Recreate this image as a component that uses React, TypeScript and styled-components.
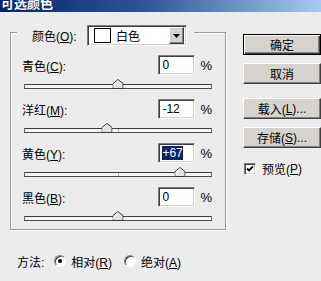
import React from 'react';
import styled, { createGlobalStyle, css } from 'styled-components';

const GlobalStyle = createGlobalStyle`
  html, body {
    margin: 0;
    padding: 0;
    background: #ececec;
  }

  body {
    font-family: "Liberation Sans", "Noto Sans CJK SC", sans-serif;
    font-size: 12px;
    color: #000;
  }
`;

const Window = styled.div`
  width: 321px;
  height: 281px;
  overflow: hidden;
  background: #ececec;
`;

const TitleBar = styled.div`
  height: 12px;
  overflow: hidden;
  background: linear-gradient(to right, #0a246a 0%, #2f5596 45%, #a6caf0 100%);
`;

const Title = styled.div`
  margin-top: -5px;
  padding-left: 1px;
  font-family: "Noto Sans CJK SC", sans-serif;
  font-size: 13px;
  font-weight: bold;
  line-height: 16px;
  color: #fff;
`;

const Body = styled.div`
  display: flex;
  align-items: flex-start;
  padding: 20px 0 0 10px;
`;

const GroupBox = styled.div`
  position: relative;
  box-sizing: border-box;
  width: 227px;
  padding: 22px 13px 8px 11px;
  border: 1px solid #9a9a9a;
  box-shadow: inset 1px 1px 0 #fff, 1px 1px 0 #fff;
`;

const Legend = styled.div`
  position: absolute;
  top: -8px;
  left: 6px;
  display: flex;
  align-items: center;
  height: 21px;
  padding: 0 7px 0 15px;
  background: #ececec;
`;

const LegendLabel = styled.span`
  width: 55px;
  white-space: nowrap;
`;

const U = styled.span`
  text-decoration: underline;
`;

const sunken = css`
  box-sizing: border-box;
  border: 1px solid;
  border-color: #7c7c7c #fff #fff #7c7c7c;
  box-shadow: inset 1px 1px 0 #404040, inset -1px -1px 0 #d4d0c8;
  background: #fff;
`;

const raised = css`
  box-sizing: border-box;
  border: 1px solid;
  border-color: #fff #404040 #404040 #fff;
  box-shadow: inset -1px -1px 0 #808080;
  background: #d6d3ce;
`;

const Dropdown = styled.div`
  ${sunken};
  display: flex;
  align-items: center;
  width: 100px;
  height: 21px;
  padding: 2px;
`;

const Swatch = styled.span`
  box-sizing: border-box;
  width: 17px;
  height: 15px;
  margin-left: 4px;
  border: 1px solid #000;
  background: #fff;
`;

const DropdownText = styled.span`
  margin-left: 5px;
`;

const ArrowButton = styled.span`
  ${raised};
  display: flex;
  align-items: center;
  justify-content: center;
  width: 15px;
  height: 17px;
  margin-left: auto;
`;

const Row = styled.div`
  & + & {
    margin-top: 10px;
  }
`;

const RowHead = styled.div`
  display: flex;
  align-items: center;
  height: 20px;
`;

const RowLabel = styled.span`
  flex: 1;
  white-space: nowrap;
`;

const NumberField = styled.div`
  ${sunken};
  display: flex;
  align-items: center;
  width: 37px;
  height: 20px;
  padding: 0 3px;
  font-size: 12px;
`;

const FieldValue = styled.span<{ $selected?: boolean }>`
  line-height: 14px;
  ${(props) =>
    props.$selected &&
    css`
      background: #0a246a;
      color: #fff;
    `}
`;

const Percent = styled.span`
  margin-left: 5px;
  font-size: 13px;
`;

const Track = styled.div`
  position: relative;
  box-sizing: border-box;
  height: 5px;
  margin: 9px 0 0 2px;
  border-top: 1px solid #3c3c3c;
  border-bottom: 1px solid #4a4a4a;
  border-left: 1px solid #6a6a6a;
  border-right: 1px solid #6a6a6a;
  background: #f6f6f6;

  &::after {
    content: '';
    position: absolute;
    left: 50%;
    top: 0;
    width: 1px;
    height: 3px;
    background: #a8a8a8;
  }
`;

const Thumb = styled.svg`
  position: absolute;
  bottom: -1px;
  z-index: 1;
  transform: translateX(-50%);
`;

const Side = styled.div`
  display: flex;
  flex-direction: column;
  margin-left: 17px;
  padding-top: 2px;
`;

const ButtonGroup = styled.div`
  display: flex;
  flex-direction: column;
  gap: 8px;

  & + & {
    margin-top: 14px;
  }
`;

const Button = styled.div<{ $default?: boolean }>`
  ${raised};
  display: flex;
  align-items: center;
  justify-content: center;
  width: 78px;
  height: 21px;
  white-space: nowrap;
  ${(props) =>
    props.$default &&
    css`
      border: 1px solid #000;
      box-shadow: inset 1px 1px 0 #fff, inset -1px -1px 0 #404040,
        inset -2px -2px 0 #808080;
    `}
`;

const CheckRow = styled.label`
  display: flex;
  align-items: center;
  margin-top: 12px;
  padding-left: 1px;
`;

const CheckBox = styled.span`
  ${sunken};
  display: flex;
  align-items: center;
  justify-content: center;
  width: 12px;
  height: 12px;
  margin-right: 6px;
`;

const MethodRow = styled.div`
  display: flex;
  align-items: center;
  height: 16px;
  margin-top: 23px;
  padding-left: 17px;
`;

const MethodLabel = styled.span`
  margin-right: 10px;
`;

const Radio = styled.span<{ $checked?: boolean }>`
  box-sizing: border-box;
  display: flex;
  align-items: center;
  justify-content: center;
  width: 12px;
  height: 12px;
  margin-right: 5px;
  border-radius: 50%;
  border: 1px solid;
  border-color: #808080 #fff #fff #808080;
  box-shadow: inset 1px 1px 0 #404040;
  background: #fff;

  &::after {
    content: '';
    width: 4px;
    height: 4px;
    border-radius: 50%;
    background: ${(props) => (props.$checked ? '#000' : 'transparent')};
  }
`;

const RadioText = styled.span`
  margin-right: 12px;
`;

const sliders = [
  { name: '青色', key: 'C', value: 0 },
  { name: '洋红', key: 'M', value: -12 },
  { name: '黄色', key: 'Y', value: 67, selected: true },
  { name: '黑色', key: 'B', value: 0 },
];

const formatValue = (v: number, selected?: boolean) =>
  selected && v > 0 ? `+${v}` : String(v);

export default function App() {
  return (
    <Window>
      <GlobalStyle />
      <TitleBar>
        <Title>可选颜色</Title>
      </TitleBar>

      <Body>
        <GroupBox>
          <Legend>
            <LegendLabel>
              颜色(<U>O</U>):
            </LegendLabel>
            <Dropdown>
              <Swatch />
              <DropdownText>白色</DropdownText>
              <ArrowButton>
                <svg width="7" height="4" viewBox="0 0 7 4">
                  <path d="M0 0h7L3.5 4z" fill="#000" />
                </svg>
              </ArrowButton>
            </Dropdown>
          </Legend>

          {sliders.map((s) => (
            <Row key={s.key}>
              <RowHead>
                <RowLabel>
                  {s.name}(<U>{s.key}</U>):
                </RowLabel>
                <NumberField>
                  <FieldValue $selected={s.selected}>
                    {formatValue(s.value, s.selected)}
                  </FieldValue>
                </NumberField>
                <Percent>%</Percent>
              </RowHead>
              <Track>
                <Thumb
                  width="11"
                  height="10"
                  viewBox="0 0 11 10"
                  style={{ left: `${50 + s.value / 2}%` }}
                >
                  <path
                    d="M0.5 9.5V4.5L5.5 0.5L10.5 4.5V9.5Z"
                    fill="#e4e2de"
                    stroke="#3a3a3a"
                  />
                  <path d="M1.5 8.5V5L5.5 1.8" fill="none" stroke="#fff" />
                </Thumb>
              </Track>
            </Row>
          ))}
        </GroupBox>

        <Side>
          <ButtonGroup>
            <Button $default>确定</Button>
            <Button>取消</Button>
          </ButtonGroup>
          <ButtonGroup>
            <Button>
              载入(<U>L</U>)...
            </Button>
            <Button>
              存储(<U>S</U>)...
            </Button>
          </ButtonGroup>
          <CheckRow>
            <CheckBox>
              <svg width="8" height="8" viewBox="0 0 8 8">
                <path
                  d="M1 3.5L3 5.5L7 1.5"
                  fill="none"
                  stroke="#000"
                  strokeWidth="1.8"
                />
              </svg>
            </CheckBox>
            预览(<U>P</U>)
          </CheckRow>
        </Side>
      </Body>

      <MethodRow>
        <MethodLabel>方法:</MethodLabel>
        <Radio $checked />
        <RadioText>
          相对(<U>R</U>)
        </RadioText>
        <Radio />
        <RadioText>
          绝对(<U>A</U>)
        </RadioText>
      </MethodRow>
    </Window>
  );
}
